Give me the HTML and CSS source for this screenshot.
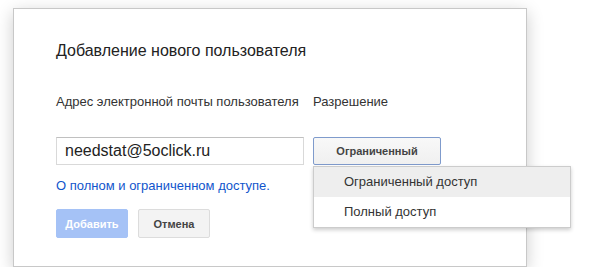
FILE: index.html
```html
<!DOCTYPE html>
<html lang="ru">
<head>
    <meta charset="UTF-8">
    <meta name="viewport" content="width=device-width, initial-scale=1.0">
    <title>Добавление нового пользователя</title>
    <link rel="stylesheet" href="styles.css">
</head>
<body>
    <div class="dialog">
        <h2 class="dialog-title">Добавление нового пользователя</h2>

        <div class="fields">
            <label class="field-label" for="email">Адрес электронной почты пользователя</label>
            <span class="field-label">Разрешение</span>

            <input type="text" id="email" class="email-input" value="needstat@5oclick.ru">
            <div class="perm">
                <button type="button" class="perm-button">Ограниченный</button>
                <ul class="perm-menu">
                    <li class="perm-item active">Ограниченный доступ</li>
                    <li class="perm-item">Полный доступ</li>
                </ul>
            </div>
        </div>

        <a class="help-link" href="#">О полном и ограниченном доступе.</a>

        <div class="actions">
            <button type="button" class="btn btn-add">Добавить</button>
            <button type="button" class="btn btn-cancel">Отмена</button>
        </div>
    </div>
</body>
</html>
```

FILE: styles.css
```css
body {
    margin: 0;
    padding: 8px 0 0 13px;
    font-family: 'Liberation Sans', Arial, sans-serif;
    background: #fff;
    color: #333;
}

.dialog {
    width: 470px;
    padding: 32px 0 28px 42px;
    background: #fff;
    border: 1px solid #c8c8c8;
    box-shadow: 0 4px 16px rgba(0, 0, 0, 0.2);
}

.dialog-title {
    margin: 0;
    font-size: 16px;
    font-weight: normal;
    line-height: 20px;
    color: #222;
}

.fields {
    display: grid;
    grid-template-columns: 248px 128px;
    column-gap: 9px;
    margin-top: 33px;
}

.field-label {
    font-size: 13px;
    line-height: 16px;
    color: #333;
    margin-bottom: 27px;
}

.email-input {
    box-sizing: border-box;
    height: 28px;
    margin: 0;
    padding: 0 8px;
    border: 1px solid #d9d9d9;
    border-top-color: #c0c0c0;
    font-family: inherit;
    font-size: 16px;
    color: #222;
    outline: none;
}

.perm {
    position: relative;
}

.perm-button {
    box-sizing: border-box;
    width: 128px;
    height: 28px;
    margin: 0;
    border: 1px solid #7f9bcc;
    border-radius: 2px;
    background: linear-gradient(#f8f8f8, #f0f0f0);
    font-family: inherit;
    font-size: 11px;
    font-weight: bold;
    color: #444;
    cursor: pointer;
}

.perm-menu {
    position: absolute;
    top: 29px;
    left: 0;
    width: 256px;
    margin: 0;
    padding: 0;
    list-style: none;
    background: #fff;
    border: 1px solid #ccc;
    box-shadow: 0 2px 4px rgba(0, 0, 0, 0.2);
}

.perm-item {
    padding: 0 0 0 30px;
    height: 30px;
    line-height: 30px;
    font-size: 13px;
    color: #333;
}

.perm-item.active {
    background: #eee;
}

.help-link {
    display: block;
    margin-top: 13px;
    font-size: 13px;
    line-height: 16px;
    color: #15c;
    text-decoration: none;
}

.actions {
    display: flex;
    gap: 10px;
    margin-top: 15px;
}

.btn {
    box-sizing: border-box;
    width: 72px;
    height: 29px;
    border-radius: 2px;
    font-family: inherit;
    font-size: 11px;
    font-weight: bold;
}

.btn-add {
    background: #a5c2f6;
    border: 1px solid #a5c2f6;
    color: #fff;
}

.btn-cancel {
    background: #f3f3f3;
    border: 1px solid #dcdcdc;
    color: #444;
}
```
